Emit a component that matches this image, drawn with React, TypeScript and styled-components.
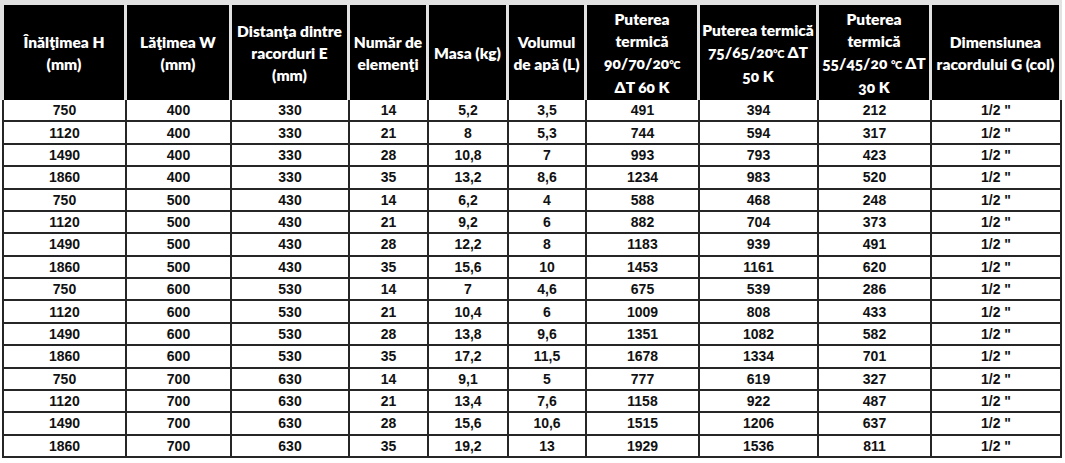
import React from "react"
import styled, { createGlobalStyle } from "styled-components"

const GlobalStyle = createGlobalStyle`
  html, body {
    margin: 0;
    padding: 0;
    background: #fff;
  }
`

// widths of the ten columns, line included
const columns = [123, 105, 118, 79, 80, 78, 113, 119, 113, 130]
const gridTemplate = columns.map((w) => `${w}px`).join(" ")

const headers: string[][] = [
  ["Înălţimea H", "(mm)"],
  ["Lăţimea W", "(mm)"],
  ["Distanţa dintre", "racorduri E", "(mm)"],
  ["Număr de", "elemenţi"],
  ["Masa (kg)"],
  ["Volumul", "de apă (L)"],
  ["Puterea", "termică", "90/70/20℃", "ΔT 60 K"],
  ["Puterea termică", "75/65/20℃ ΔT", "50 K"],
  ["Puterea", "termică", "55/45/20 ℃ ΔT", "30 K"],
  ["Dimensiunea", "racordului G (col)"],
]

const rows: string[][] = [
  ["750", "400", "330", "14", "5,2", "3,5", "491", "394", "212"],
  ["1120", "400", "330", "21", "8", "5,3", "744", "594", "317"],
  ["1490", "400", "330", "28", "10,8", "7", "993", "793", "423"],
  ["1860", "400", "330", "35", "13,2", "8,6", "1234", "983", "520"],
  ["750", "500", "430", "14", "6,2", "4", "588", "468", "248"],
  ["1120", "500", "430", "21", "9,2", "6", "882", "704", "373"],
  ["1490", "500", "430", "28", "12,2", "8", "1183", "939", "491"],
  ["1860", "500", "430", "35", "15,6", "10", "1453", "1161", "620"],
  ["750", "600", "530", "14", "7", "4,6", "675", "539", "286"],
  ["1120", "600", "530", "21", "10,4", "6", "1009", "808", "433"],
  ["1490", "600", "530", "28", "13,8", "9,6", "1351", "1082", "582"],
  ["1860", "600", "530", "35", "17,2", "11,5", "1678", "1334", "701"],
  ["750", "700", "630", "14", "9,1", "5", "777", "619", "327"],
  ["1120", "700", "630", "21", "13,4", "7,6", "1158", "922", "487"],
  ["1490", "700", "630", "28", "15,6", "10,6", "1515", "1206", "637"],
  ["1860", "700", "630", "35", "19,2", "13", "1929", "1536", "811"],
]

// the celsius sign comes from a fallback font, keep it small like the source
const renderLine = (line: string) =>
  line.split("℃").map((part, i, all) => (
    <React.Fragment key={i}>
      {part}
      {i < all.length - 1 && <S.Celsius>°C</S.Celsius>}
    </React.Fragment>
  ))

export default function App() {
  return (
    <>
      <GlobalStyle />
      <S.Sheet>
        <S.HeadRow>
          {headers.map((lines, i) => (
            <S.HeadCell key={i}>
              {lines.map((l, j) => (
                <span key={j}>{renderLine(l)}</span>
              ))}
            </S.HeadCell>
          ))}
        </S.HeadRow>
        <S.Body>
          {rows.map((r, i) => (
            <S.Row key={i}>
              {[...r, '1/2 "'].map((v, j) => (
                <S.Cell key={j}>{v}</S.Cell>
              ))}
            </S.Row>
          ))}
        </S.Body>
      </S.Sheet>
    </>
  )
}

const S = {
  Sheet: styled.div`
    width: 1062px;
  `,
  HeadRow: styled.div`
    display: grid;
    grid-template-columns: ${gridTemplate};
    height: 100px;
    box-sizing: border-box;
    border-top: 5px solid #e2e2e2;
    border-left: 4px solid #e2e2e2;
  `,
  HeadCell: styled.div`
    display: flex;
    flex-direction: column;
    align-items: center;
    justify-content: center;
    background: #000;
    border-right: 3px solid #e2e2e2;
    color: #fff;
    font-family: Lato, "Open Sans", sans-serif;
    font-weight: 800;
    font-size: 15.5px;
    line-height: 22px;
    font-variant-numeric: oldstyle-nums;
    text-align: center;
    white-space: nowrap;
  `,
  Celsius: styled.span`
    font-size: 11px;
    letter-spacing: -0.5px;
  `,
  Body: styled.div`
    margin-left: 2px;
    border-left: 2px solid #262626;
  `,
  Row: styled.div`
    display: grid;
    grid-template-columns: ${gridTemplate};
    height: 22.375px;
    box-sizing: border-box;
    border-bottom: 2px solid #262626;
  `,
  Cell: styled.div`
    display: flex;
    align-items: center;
    justify-content: center;
    border-right: 2px solid #262626;
    color: #111;
    font-family: "Liberation Sans", Arial, sans-serif;
    font-weight: 700;
    font-size: 14px;
  `,
}
